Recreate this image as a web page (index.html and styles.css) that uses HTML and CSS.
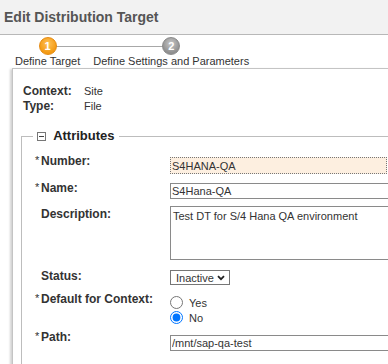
FILE: index.html
```html
<!DOCTYPE html>
<html lang="en">
<head>
  <meta charset="UTF-8">
  <meta name="viewport" content="width=device-width, initial-scale=1.0">
  <title>Edit Distribution Target</title>
  <link rel="stylesheet" href="styles.css">
</head>
<body>
  <header class="page-head">
    <h1 class="page-title">Edit Distribution Target</h1>
  </header>
  <div class="steps">
    <span class="steps-line"></span>
    <div class="step step-active">
      <span class="step-num">1</span>
      <span class="step-label">Define Target</span>
    </div>
    <div class="step">
      <span class="step-num">2</span>
      <span class="step-label">Define Settings and Parameters</span>
    </div>
  </div>
  <main class="panel">
    <div class="info">
      <span class="info-key">Context:</span><span class="info-val">Site</span>
      <span class="info-key">Type:</span><span class="info-val">File</span>
    </div>
    <fieldset class="attrs">
      <legend class="attrs-title">
        <svg class="collapse-icon" width="9" height="9" viewBox="0 0 9 9">
          <rect x="0.5" y="0.5" width="8" height="8" fill="#fff" stroke="#777"/>
          <path d="M2 4.5h5" stroke="#444" stroke-width="1"/>
        </svg>
        Attributes
      </legend>
      <div class="row row-number">
        <label class="row-label req">Number:</label>
        <input class="field field-focus" type="text" value="S4HANA-QA">
      </div>
      <div class="row row-name">
        <label class="row-label req">Name:</label>
        <input class="field" type="text" value="S4Hana-QA">
      </div>
      <div class="row row-desc">
        <label class="row-label">Description:</label>
        <textarea class="field field-area">Test DT for S/4 Hana QA environment</textarea>
      </div>
      <div class="row row-status">
        <label class="row-label">Status:</label>
        <span class="select">Inactive
          <svg width="8" height="6" viewBox="0 0 8 6"><path d="M1 1.2l3 3 3-3" fill="none" stroke="#222" stroke-width="1.8"/></svg>
        </span>
      </div>
      <div class="row row-default">
        <label class="row-label req">Default for Context:</label>
        <div class="radios">
          <label class="radio-line"><input type="radio" name="def"> Yes</label>
          <label class="radio-line"><input type="radio" name="def" checked> No</label>
        </div>
      </div>
      <div class="row row-path">
        <label class="row-label req">Path:</label>
        <input class="field" type="text" value="/mnt/sap-qa-test">
      </div>
    </fieldset>
  </main>
</body>
</html>
```

FILE: styles.css
```css
body{
  margin: 0;
  font-family: "Liberation Sans", Arial, sans-serif;
  color: #333;
  background: #fff;
  overflow: hidden;
}
.page-head{
  height: 34px;
  background: #f2f2f2;
  border-bottom: 1px solid #b8b8b8;
}
.page-title{
  margin: 0;
  padding-left: 4px;
  font-size: 14px;
  line-height: 34px;
  color: #555;
}

/* wizard steps */
.steps{
  position: relative;
  display: flex;
  gap: 13px;
  height: 33px;
  padding: 2px 0 0 15px;
  box-sizing: border-box;
}
.steps-line{
  position: absolute;
  top: 11px;
  left: 50px;
  width: 122px;
  height: 1px;
  background: #a8a8a8;
}
.step{
  display: flex;
  flex-direction: column;
  align-items: center;
}
.step-num{
  position: relative;
  width: 16px;
  height: 16px;
  border-radius: 50%;
  border: 1px solid #8a8a8a;
  background: radial-gradient(circle at 50% 35%, #c8c8c8, #8f8f8f 70%);
  color: #fff;
  font-size: 11px;
  font-weight: bold;
  line-height: 16px;
  text-align: center;
}
.step-active .step-num{
  border-color: #e58a10;
  background: radial-gradient(circle at 50% 35%, #ffc25a, #f39a12 70%);
}
.step-label{
  font-size: 11px;
  line-height: 13px;
  color: #333;
}

/* main panel */
.panel{
  display: block;
  margin-left: 12px;
  padding: 15px 0 0 10px;
  border: 1px solid #c4c4c4;
  border-right: none;
  box-shadow: -2px 1px 2px #d4d4d4;
  overflow: hidden;
}
.info{
  display: grid;
  grid-template-columns: 61px 1fr;
  line-height: 15px;
}
.info-key{
  font-size: 12px;
  font-weight: bold;
}
.info-val{
  font-size: 11px;
}
.attrs{
  margin: 15px 0 0 -2px;
  padding: 11px 0 20px 13px;
  border: 1px solid #bdbdbd;
  border-right: none;
  min-width: 0;
}
.attrs-title{
  margin-left: -2px;
  padding: 0 4px;
  font-size: 13px;
  font-weight: bold;
  line-height: 14px;
  color: #222;
}
.collapse-icon{
  margin-right: 4px;
  vertical-align: -1px;
}
.row{
  display: flex;
  align-items: flex-start;
  margin-bottom: 7px;
}
.row-label{
  flex: none;
  width: 135px;
  padding-left: 6px;
  box-sizing: border-box;
  font-size: 12px;
  font-weight: bold;
  line-height: 14px;
  color: #333;
}
.req{
  padding-left: 0;
}
.req::before{
  content: "*";
  display: inline-block;
  width: 6px;
  font-size: 11px;
  font-weight: normal;
  vertical-align: top;
  line-height: 12px;
}
.field{
  flex: none;
  width: 240px;
  height: 16px;
  margin: 2px 0 0;
  padding: 0 1px;
  box-sizing: border-box;
  border: 1px solid #8a8a8a;
  font-family: inherit;
  font-size: 11px;
  color: #333;
  outline: none;
}
.field-focus{
  width: 217px;
  height: 17px;
  margin-top: 3px;
  background: #fdefe0;
  border: 1px dotted #777;
}
.field-area{
  height: 54px;
  margin-top: 0;
  padding: 3px 2px;
  resize: none;
  line-height: 13px;
}
.row-desc{
  margin-bottom: 9px;
}
.row-desc .row-label{
  margin-top: 1px;
}
.select{
  display: inline-flex;
  align-items: center;
  gap: 3px;
  width: 60px;
  height: 15px;
  margin-top: 1px;
  padding: 0 0 0 5px;
  box-sizing: border-box;
  border: 1px solid #767676;
  font-size: 11px;
  color: #333;
}
.radios{
  margin-top: 3px;
}
.radio-line{
  display: flex;
  align-items: center;
  height: 15px;
  font-size: 11px;
}
.radio-line input{
  width: 13px;
  height: 13px;
  margin: 0 6px 0 0;
}
.row-default{
  margin-bottom: 5px;
}
.row-path .field{
  margin-top: 5px;
}
```
